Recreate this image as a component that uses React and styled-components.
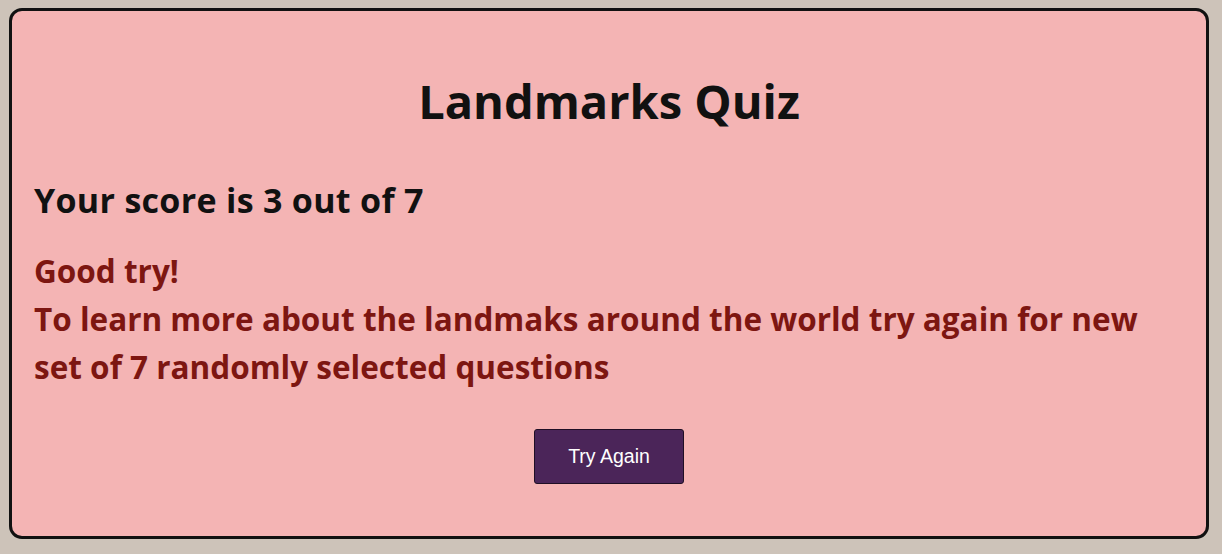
import React from "react";
import styled, { createGlobalStyle } from "styled-components";

const Global = createGlobalStyle`
  html, body { margin: 0; padding: 0; background: #cdc3b9; }
  body { padding: 8px 13px 15px 9px; font-family: "Open Sans", "Noto Sans", sans-serif; }
`;

const Card = styled.div`
  box-sizing: border-box;
  height: 531px;
  border: 3px solid #111;
  border-radius: 13px;
  background: #f4b4b4;
  padding: 0 22px;
  display: flex;
  flex-direction: column;
`;

const Title = styled.h1`
  margin: 66px 0 0;
  text-align: center;
  font-size: 47px;
  line-height: 48px;
  font-weight: 700;
  color: #111;
`;

const Score = styled.h2`
  margin: 55px 0 0;
  font-size: 34px;
  letter-spacing: 0.3px;
  line-height: 40px;
  font-weight: 700;
  color: #111;
`;

const Message = styled.p`
  margin: 27px 0 0;
  font-size: 31.5px;
  line-height: 48px;
  font-weight: 700;
  color: #7d1611;
`;

const Actions = styled.div`
  display: flex;
  justify-content: center;
  margin-top: 38px;
`;

const Button = styled.button`
  width: 150px;
  height: 55px;
  background: #4b2559;
  color: #fff;
  border: 1px solid #1f0f25;
  border-radius: 3px;
  font-family: "Liberation Sans", Arial, sans-serif;
  font-size: 19.5px;
  cursor: pointer;
`;

export default function App() {
  return (
    <>
      <Global />
      <Card>
        <Title>Landmarks Quiz</Title>
        <Score>Your score is 3 out of 7</Score>
        <Message>
          Good try!
          <br />
          To learn more about the landmaks around the world try again for new set of 7 randomly selected questions
        </Message>
        <Actions>
          <Button>Try Again</Button>
        </Actions>
      </Card>
    </>
  );
}
